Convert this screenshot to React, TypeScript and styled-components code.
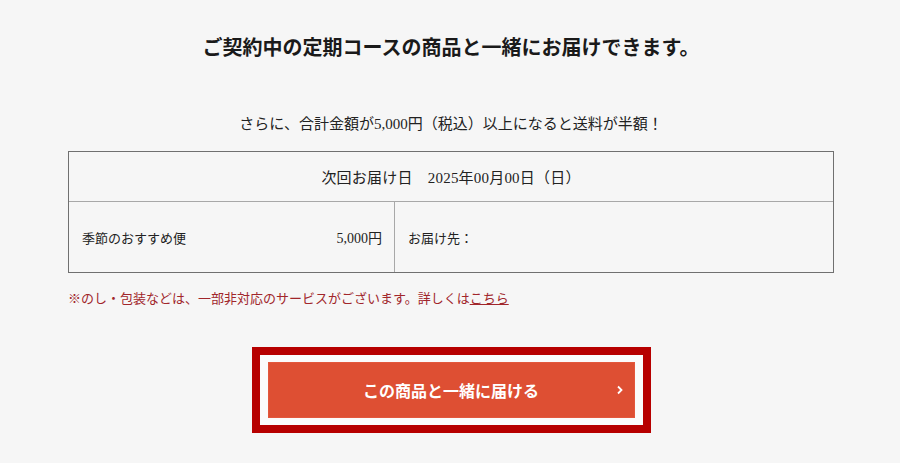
import React from "react";
import styled, { createGlobalStyle } from "styled-components";

const GlobalStyle = createGlobalStyle`
  html, body {
    margin: 0;
    padding: 0;
    background: #f6f6f6;
  }
  body {
    font-family: "Liberation Serif", "Noto Sans CJK JP", serif;
    color: #222;
  }
`;

const Page = styled.div`
  width: 900px;
  height: 463px;
  box-sizing: border-box;
  padding: 34px 66px 0 68px;
  display: flex;
  flex-direction: column;
  align-items: center;
  overflow: hidden;
`;

const Heading = styled.h2`
  margin: 0;
  font-size: 20px;
  line-height: 28px;
  font-weight: 700;
  color: #1a1a1a;
`;

const Lead = styled.p`
  margin: 51px 0 0;
  font-size: 15px;
  line-height: 22px;
  color: #222;
`;

const Table = styled.div`
  margin-top: 16px;
  width: 766px;
  box-sizing: border-box;
  border: 1px solid #707070;
  display: grid;
  grid-template-columns: 326px 1fr;
`;

const DateRow = styled.div`
  grid-column: 1 / -1;
  height: 49px;
  display: flex;
  align-items: center;
  justify-content: center;
  font-size: 15px;
  letter-spacing: 0.2px;
  border-bottom: 1px solid #a8a8a8;
`;

const Cell = styled.div<{ $divider?: boolean }>`
  height: 70px;
  display: flex;
  align-items: center;
  justify-content: space-between;
  padding: 0 12px 0 13px;
  font-size: 13px;
  border-right: ${(p) => (p.$divider ? "1px solid #a8a8a8" : "none")};
`;

const Price = styled.span`
  font-size: 14px;
`;

const Note = styled.p`
  align-self: flex-start;
  margin: 17px 0 0;
  font-size: 13px;
  line-height: 18px;
  color: #a1262b;
`;

const NoteLink = styled.a`
  color: inherit;
  text-decoration: underline;
`;

const Highlight = styled.div`
  margin-top: 39px;
  border: 8px solid #b70000;
  background: #fbfbfb;
  padding: 7px 8px;
`;

const OrderButton = styled.button`
  position: relative;
  width: 367px;
  height: 56px;
  border: 1px solid #e3573c;
  background: #de4f33;
  color: #fff;
  font-family: "Noto Sans CJK JP", sans-serif;
  font-size: 16px;
  font-weight: 700;
  cursor: pointer;
  display: flex;
  align-items: center;
  justify-content: center;
  padding: 0;
`;

const Chevron = styled.svg`
  position: absolute;
  right: 10px;
  top: 50%;
  transform: translateY(-50%);
`;

const App: React.FC = () => (
  <>
    <GlobalStyle />
    <Page>
      <Heading>ご契約中の定期コースの商品と一緒にお届けできます。</Heading>
      <Lead>さらに、合計金額が5,000円（税込）以上になると送料が半額！</Lead>
      <Table>
        <DateRow>次回お届け日　2025年00月00日（日）</DateRow>
        <Cell $divider>
          <span>季節のおすすめ便</span>
          <Price>5,000円</Price>
        </Cell>
        <Cell>
          <span>お届け先：</span>
        </Cell>
      </Table>
      <Note>
        ※のし・包装などは、一部非対応のサービスがございます。詳しくは
        <NoteLink href="#">こちら</NoteLink>
      </Note>
      <Highlight>
        <OrderButton>
          この商品と一緒に届ける
          <Chevron width="8" height="10" viewBox="0 0 8 10">
            <path d="M2 1.5 L5.5 5 L2 8.5" fill="none" stroke="#fff" strokeWidth="1.8" />
          </Chevron>
        </OrderButton>
      </Highlight>
    </Page>
  </>
);

export default App;
